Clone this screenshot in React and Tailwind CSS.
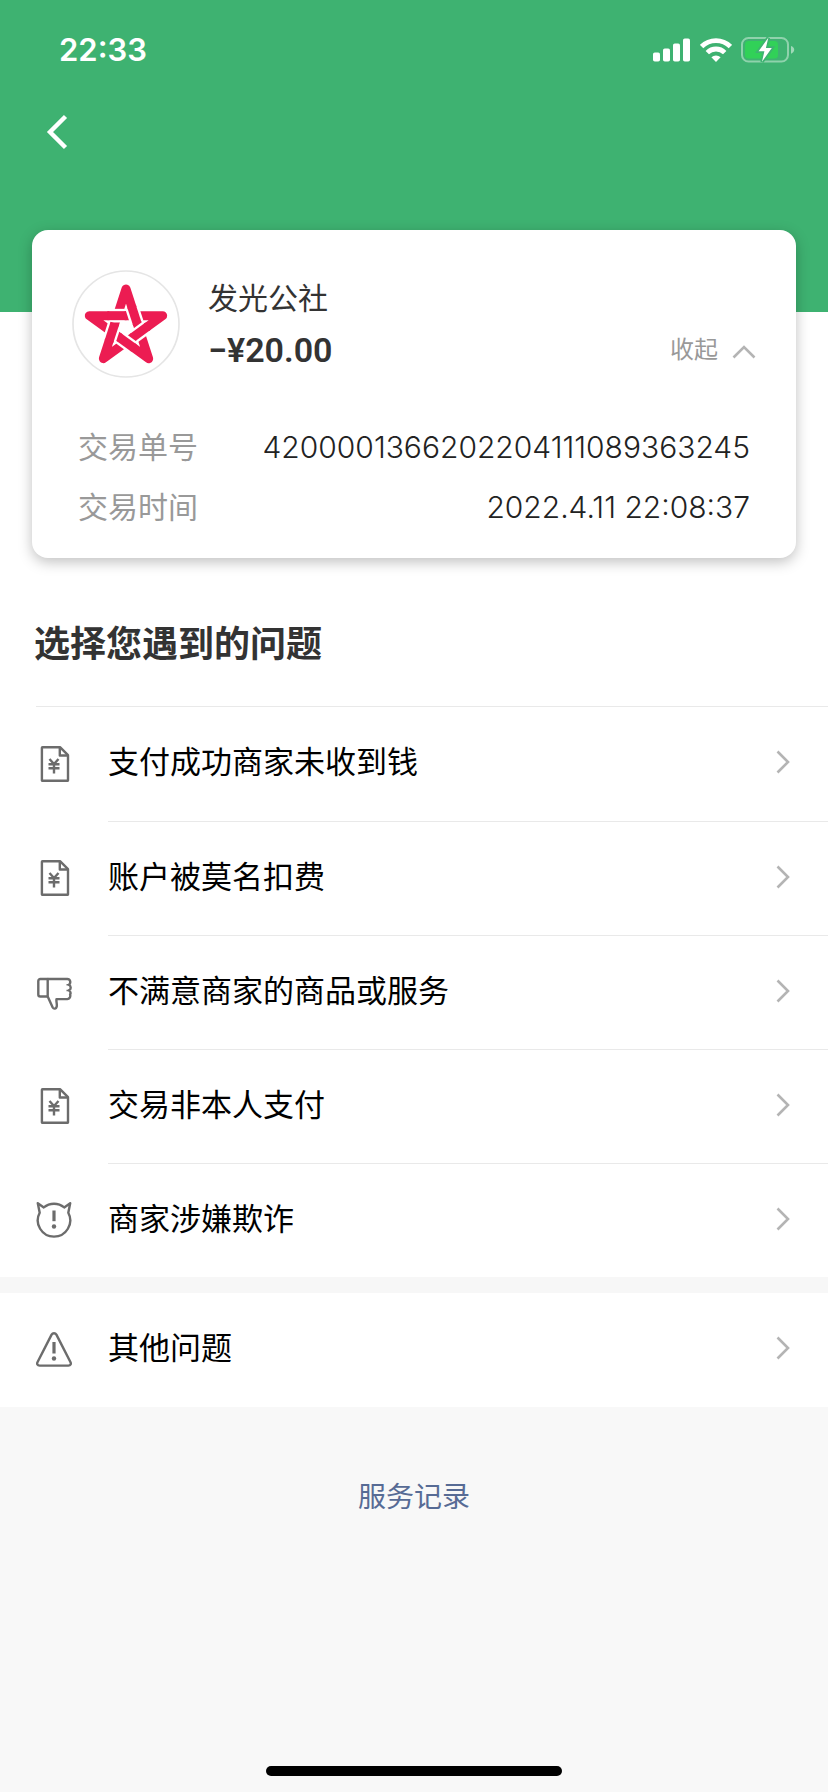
const STAR_TURNS = [0, 72, 144, 216, 288];

function SignalIcon() {
  return (
    <svg viewBox="0 0 38 24" className="h-6 w-[38px]" fill="currentColor" aria-hidden="true">
      <rect x="0" y="14.5" width="7" height="9" rx="1.8" />
      <rect x="10" y="10.5" width="7" height="13" rx="1.8" />
      <rect x="20" y="5.5" width="7" height="18" rx="1.8" />
      <rect x="30" y="0.5" width="7" height="23" rx="1.8" />
    </svg>
  );
}

function WifiIcon() {
  return (
    <svg viewBox="0 0 32 24" className="h-6 w-8" fill="none" stroke="currentColor" strokeWidth="4.8" aria-hidden="true">
      <path d="M1.6 8.6a20.4 20.4 0 0 1 28.8 0" />
      <path d="M7.3 14.6a12.3 12.3 0 0 1 17.4 0" />
      <path d="M16 24l-4.6-4.7a6.5 6.5 0 0 1 9.2 0z" fill="currentColor" stroke="none" />
    </svg>
  );
}

function BatteryIcon() {
  return (
    <svg viewBox="0 0 54 26" className="h-[26px] w-[54px]" aria-hidden="true">
      <rect x="1" y="1" width="46" height="23.5" rx="6.5" fill="none" stroke="#fff" strokeOpacity="0.42" strokeWidth="2" />
      <path d="M50 9c2 .6 3.2 2 3.2 3.8S52 16 50 16.7z" fill="#fff" fillOpacity="0.5" />
      <rect x="4" y="4" width="33" height="17.5" rx="3.5" fill="#31d158" />
      <path
        d="M27.3 .8L17.6 14.2h5.8L21 24.8 30.8 11h-5.9z"
        fill="#fff"
        stroke="#3eb271"
        strokeWidth="3.6"
        paintOrder="stroke"
      />
    </svg>
  );
}

function StarLogo() {
  return (
    <svg viewBox="0 0 324 324" className="size-27 shrink-0" role="img" aria-label="发光公社">
      <circle cx="162" cy="162" r="159" fill="#fff" stroke="#e5e5e5" strokeWidth="5" />
      <path
        d="M162 57L230 266L52 137H272L94 266Z"
        fill="none"
        stroke="#ec1c52"
        strokeWidth="27"
        strokeLinejoin="round"
      />
      {STAR_TURNS.map((turn) => (
        <g key={turn} transform={`rotate(${turn} 162 172.7)`}>
          <path d="M112 137H158" stroke="#fff" strokeWidth="41" />
          <path d="M106 137H164" stroke="#ec1c52" strokeWidth="27" />
        </g>
      ))}
    </svg>
  );
}

function LineIcon({ children }) {
  return (
    <svg
      viewBox="0 0 36 36"
      className="size-9 shrink-0 text-[#6c6c6c]"
      fill="none"
      stroke="currentColor"
      strokeWidth="2.4"
      strokeLinejoin="round"
      aria-hidden="true"
    >
      {children}
    </svg>
  );
}

function BillIcon() {
  return (
    <LineIcon>
      <path d="M6.5 1.2H24L32 9.2V34.2a.6.6 0 0 1-.6.6H6.5a.6.6 0 0 1-.6-.6V1.8a.6.6 0 0 1 .6-.6z" />
      <path d="M23.8 1.5v8h8" />
      <path d="M13.5 13l4.5 5 4.5-5M12.5 18.3h11M12.5 22.3h11M18 18v9.5" />
    </LineIcon>
  );
}

function ThumbDownIcon() {
  return (
    <LineIcon>
      <path d="M11.7 22.5H4.3a2 2 0 0 1-2-2V7a2 2 0 0 1 2-2h7.4z" />
      <path d="M11.7 5h19.6c3 0 4 3.8 1.6 5.8 2.4 1.4 2.4 4.4 0 5.6 2.7 2 1.7 3 1.2 4.1.7 2.4-.6 4.6-2.8 4.6H20.5c-.5 2.4.8 5 .2 7.5-.5 2.2-2.9 2.8-4 .9l-5-11" />
      <path d="M30.5 10.8h2.4M30.5 16.4h2.4" strokeWidth="1.5" />
    </LineIcon>
  );
}

function DevilIcon() {
  return (
    <LineIcon>
      <path d="M1.8 1.2L7.8 5.4a16.2 16.2 0 0 1 20.4 0L34.2 1.2L32.3 10.800a16.200 16.200 0 1 1-28.600 0z" />
      <path d="M18 8.5v10.7" strokeWidth="3.2" />
      <circle cx="18" cy="24.5" r="2.2" fill="currentColor" stroke="none" />
    </LineIcon>
  );
}

function WarningIcon() {
  return (
    <LineIcon>
      <path d="M15.6 2.6a2.8 2.8 0 0 1 4.8 0L34.4 30c1 1.9.2 3.6-2 3.6H3.6c-2.2 0-3-1.7-2-3.6z" />
      <path d="M18 10v11.5" strokeWidth="3.2" />
      <circle cx="18" cy="26.5" r="2.2" fill="currentColor" stroke="none" />
    </LineIcon>
  );
}

function ChevronRight() {
  return (
    <svg viewBox="0 0 14 24" className="h-6 w-3.5 shrink-0" fill="none" stroke="#b4b4b4" strokeWidth="2.6" aria-hidden="true">
      <path d="M1.5 1.5L12 12L1.5 22.5" />
    </svg>
  );
}

const ISSUES = [
  { label: "支付成功商家未收到钱", Icon: BillIcon },
  { label: "账户被莫名扣费", Icon: BillIcon },
  { label: "不满意商家的商品或服务", Icon: ThumbDownIcon },
  { label: "交易非本人支付", Icon: BillIcon },
  { label: "商家涉嫌欺诈", Icon: DevilIcon },
];

function IssueRow({ label, Icon, divided }) {
  return (
    <button type="button" className="flex w-full items-center gap-9 pl-9 text-left">
      <Icon />
      <span
        className={
          divided
            ? "flex h-[114px] flex-1 items-center justify-between border-t border-[#e9e9e9] pr-[38px] pb-1"
            : "flex h-[114px] flex-1 items-center justify-between pr-[38px] pb-1"
        }
      >
        <span className="text-[31px] leading-10 text-black">{label}</span>
        <ChevronRight />
      </span>
    </button>
  );
}

function Detail({ label, value }) {
  return (
    <div className="flex justify-between">
      <dt className="text-[#999]">{label}</dt>
      <dd className="font-light text-[#222]">{value}</dd>
    </div>
  );
}

export default function App() {
  return (
    <div className="flex min-h-screen flex-col bg-[#f8f8f8] font-['Inter','Noto_Sans_CJK_SC',sans-serif]">
      <header className="h-78 bg-[#3eb271] text-white">
        <div className="flex h-25 items-center justify-between pr-[33px] pl-[59px]">
          <time className="text-[31px] font-semibold">22:33</time>
          <div className="flex items-center gap-[9px]">
            <SignalIcon />
            <WifiIcon />
            <BatteryIcon />
          </div>
        </div>
        <button type="button" aria-label="返回" className="ml-11 flex h-16 w-12 items-center">
          <svg viewBox="0 0 24 36" className="h-9 w-6" fill="none" stroke="currentColor" strokeWidth="4.4" aria-hidden="true">
            <path d="M21.5 2.5L6 18L21.5 33.5" />
          </svg>
        </button>
      </header>

      <main className="bg-white">
        <section className="mx-8 -mt-[82px] rounded-2xl bg-white pt-10 pb-[21px] shadow-[0_4px_14px_rgba(0,0,0,0.25)]">
          <div className="flex items-center gap-7 pr-10 pl-10">
            <StarLogo />
            <div className="flex flex-1 flex-col gap-3 text-[#333]">
              <h2 className="text-3xl leading-10">发光公社</h2>
              <div className="flex items-center justify-between">
                <p className="font-[Roboto,sans-serif] text-[34px] leading-10 font-semibold">−¥20.00</p>
                <button type="button" className="flex items-center gap-3.5 text-2xl text-[#999]">
                  收起
                  <svg viewBox="0 0 24 14" className="mt-1 h-3.5 w-6" fill="none" stroke="#b4b4b4" strokeWidth="2.6" aria-hidden="true">
                    <path d="M1.5 12.5L12 2L22.5 12.5" />
                  </svg>
                </button>
              </div>
            </div>
          </div>
          <dl className="mt-[39px] px-[46px] text-3xl leading-15">
            <Detail label="交易单号" value="4200001366202204111089363245" />
            <Detail label="交易时间" value="2022.4.11 22:08:37" />
          </dl>
        </section>

        <h1 className="px-[34px] pt-[61px] pb-[37px] text-4xl leading-[50px] font-semibold text-[#333]">选择您遇到的问题</h1>

        <div className="ml-9 border-t border-[#e9e9e9]" />
        {ISSUES.map((issue, index) => (
          <IssueRow key={issue.label} label={issue.label} Icon={issue.Icon} divided={index > 0} />
        ))}
        <div className="h-4 bg-[#f7f7f7]" />
        <IssueRow label="其他问题" Icon={WarningIcon} divided={false} />
      </main>

      <footer className="flex flex-1 flex-col items-center justify-between pt-[70px] pb-4">
        <a href="#records" className="text-[28px] leading-10 text-[#576b95]">
          服务记录
        </a>
        <div className="h-2.5 w-74 rounded-full bg-black" />
      </footer>
    </div>
  );
}
